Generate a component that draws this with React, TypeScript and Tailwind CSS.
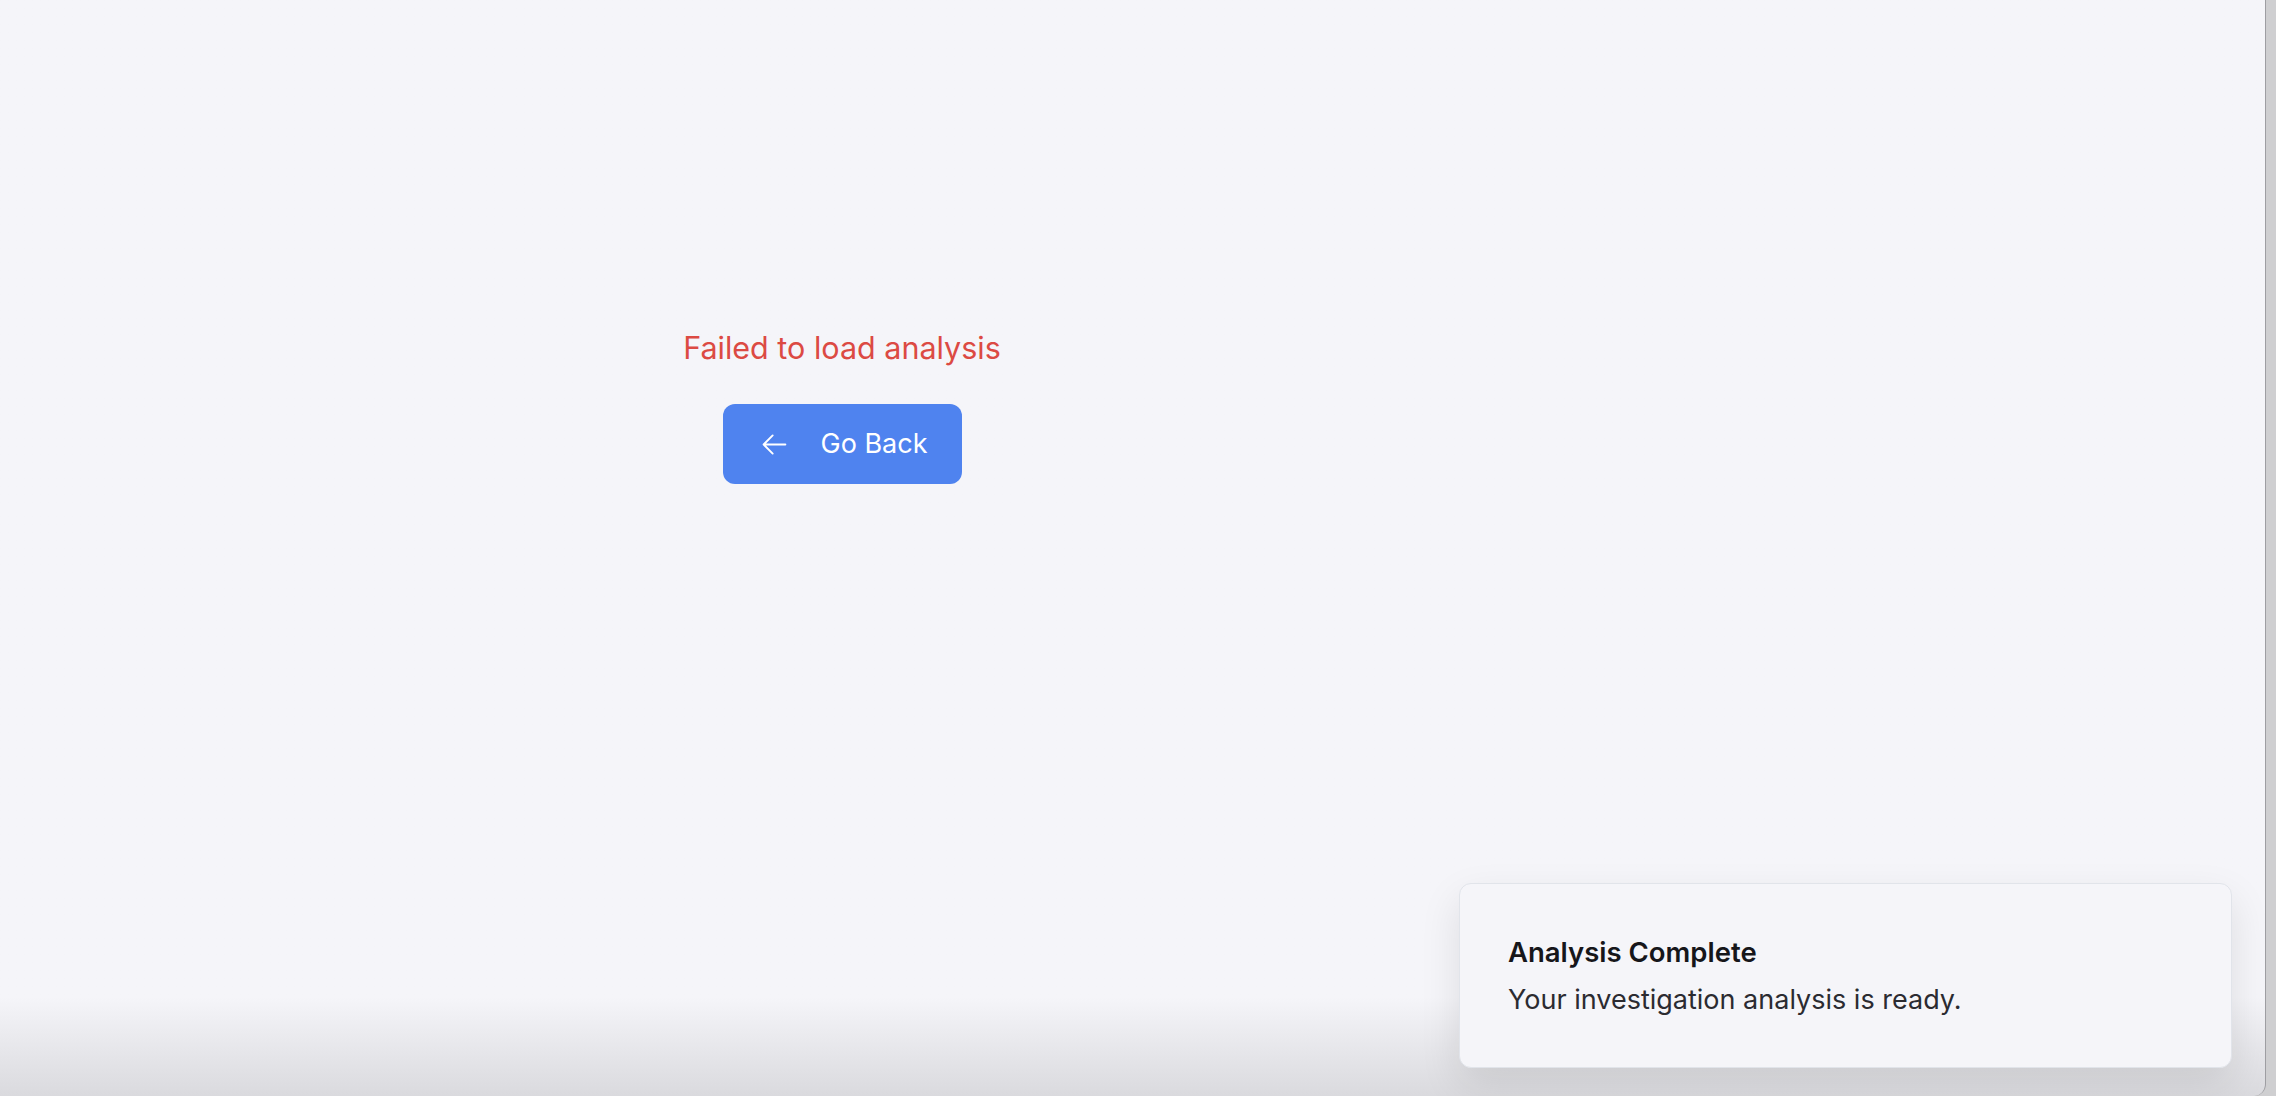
export default function App() {
  return (
    <div
      className="flex h-screen w-full bg-[#cfcfd1]"
      style={{ fontFamily: "Inter, 'Noto Sans', sans-serif" }}
    >
      <main className="relative flex-1 overflow-hidden rounded-br-[12px] border-r border-[#9e9ea2] bg-linear-to-b from-[#f5f5f9] from-[91%] to-[#dadade]">
        <div className="flex w-[1684px] flex-col items-center pt-[326px]">
          <p className="text-[30.5px] leading-[44px] text-[#dc4a43]">Failed to load analysis</p>
          <button className="mt-[34px] flex h-[80px] items-center gap-[32px] rounded-xl bg-[#4f83ef] pl-[37px] pr-[34px] text-[27px] text-white">
            <svg
              width="29"
              height="29"
              viewBox="0 0 24 24"
              fill="none"
              stroke="currentColor"
              strokeWidth="1.6"
              strokeLinecap="round"
              strokeLinejoin="round"
            >
              <path d="M10.5 19.5 3 12m0 0 7.5-7.5M3 12h18" />
            </svg>
            <span>Go Back</span>
          </button>
        </div>

        {/* toast */}
        <div className="absolute bottom-[28px] right-[33px] flex h-[185px] w-[773px] flex-col justify-center gap-[12px] rounded-xl border border-[#e1e4ea] bg-[#f5f5f9] px-[48px] shadow-[0_16px_40px_rgba(0,0,0,0.10)]">
          <p className="text-[27.5px] font-semibold leading-[36px] text-[#16161a]">Analysis Complete</p>
          <p className="text-[27px] leading-[36px] text-[#2b2b31]">Your investigation analysis is ready.</p>
        </div>
      </main>
      <div className="w-[10px] shrink-0" />
    </div>
  );
}
